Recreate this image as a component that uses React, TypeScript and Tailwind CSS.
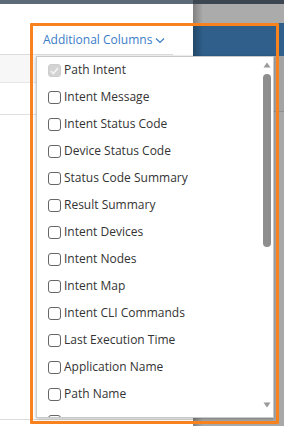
const columns = [
  { name: "Path Intent", checked: true },
  { name: "Intent Message" },
  { name: "Intent Status Code" },
  { name: "Device Status Code" },
  { name: "Status Code Summary" },
  { name: "Result Summary" },
  { name: "Intent Devices" },
  { name: "Intent Nodes" },
  { name: "Intent Map" },
  { name: "Intent CLI Commands" },
  { name: "Last Execution Time" },
  { name: "Application Name" },
  { name: "Path Name" },
  { name: "" },
];

const Checkbox = ({ checked }: { checked?: boolean }) =>
  checked ? (
    <div className="w-[13px] h-[13px] rounded-[3px] bg-[#d3d3d3] border border-[#cdcdcd] flex items-center justify-center shrink-0">
      <svg width="9" height="8" viewBox="0 0 9 8">
        <path d="M1 4.2l2.3 2.3L8 1.2" fill="none" stroke="#f2f2f2" strokeWidth="1.8" />
      </svg>
    </div>
  ) : (
    <div className="w-[13px] h-[13px] rounded-[3px] bg-white border border-[#666] shrink-0" />
  );

const App = () => {
  return (
    <div className="relative w-[284px] h-[426px] overflow-hidden bg-white font-['Open_Sans',sans-serif]">
      {/* page behind */}
      <div className="flex flex-col h-full">
        <div className="flex h-[4px]">
          <div className="w-[193px] bg-[#5d6b78]" />
          <div className="flex-1 bg-[#3c4650]" />
        </div>
        <div className="flex flex-1">
          <div className="w-[193px] bg-white flex flex-col">
            <div className="h-[51px] w-[173px] border-b border-[#dcdcdc]" />
            <div className="h-[28px] bg-[#f7f7f7] border-b border-[#e6e6e6]" />
            <div className="h-[32px] border-b border-[#e0e0e0]" />
            <div className="flex-1 border-b border-[#dcdcdc]" />
            <div className="h-[6px]" />
          </div>
          <div className="relative flex-1 flex flex-col">
            <div className="h-[19px] bg-[#ababab]" />
            <div className="h-[33px] bg-[#2f5f8a]" />
            <div className="h-[56px] bg-[#a4a4a4] border-b border-[#8f8f8f]" />
            <div className="flex-1 bg-[#a8a8a8]" />
            <div className="absolute inset-y-0 left-0 w-[10px] bg-gradient-to-r from-black/25 to-transparent" />
          </div>
        </div>
      </div>

      {/* Additional Columns trigger */}
      <div className="absolute left-[43px] top-[32px] flex items-center gap-[3px] text-[12px] leading-[16px] text-[#3b7dc8]">
        <span>Additional Columns</span>
        <svg width="10" height="7" viewBox="0 0 10 7" className="mt-[1px]">
          <path d="M1 1.5l4 4 4-4" fill="none" stroke="#3b7dc8" strokeWidth="1.2" />
        </svg>
      </div>

      {/* dropdown */}
      <div className="absolute left-[36px] top-[56px] w-[238px] h-[362px] bg-white border border-[#c9c9c9] shadow-[0_1px_3px_rgba(0,0,0,0.25)] flex">
        <div className="flex-1 flex flex-col overflow-hidden pl-[11px]">
          {columns.map(({ name, checked }, i) => (
            <div key={i} className="h-[27px] shrink-0 flex items-center gap-[3px] text-[12px] leading-[14px] text-[#333]">
              <Checkbox checked={checked} />
              {name && <span className="-mt-[1px]">{name}</span>}
            </div>
          ))}
        </div>
        <div className="w-[12px] flex flex-col items-center pt-[5px] pb-[9px] bg-white">
          <svg width="8" height="6" viewBox="0 0 8 6">
            <path d="M4 0.5L7.5 5.5H0.5z" fill="#9a9a9a" />
          </svg>
          <div className="mt-[6px] w-[8px] h-[173px] rounded-full bg-[#8e8e8e]" />
          <div className="flex-1" />
          <svg width="8" height="6" viewBox="0 0 8 6">
            <path d="M0.5 0.5H7.5L4 5.5z" fill="#9a9a9a" />
          </svg>
        </div>
      </div>

      {/* highlight frame */}
      <div className="absolute left-[30px] top-[23px] w-[249px] h-[401px] border-[3px] border-[#f7821e] rounded-[1px]" />
    </div>
  );
};

export default App;
